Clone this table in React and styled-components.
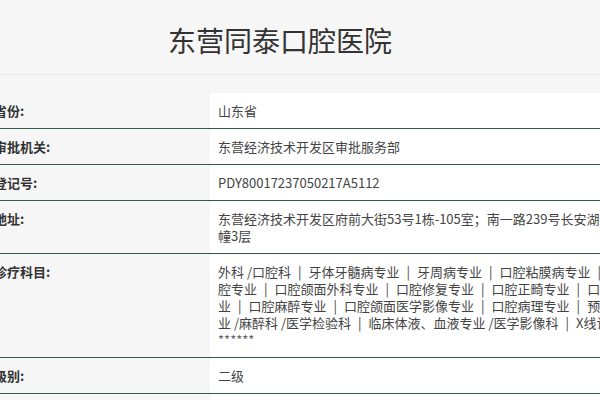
import React from 'react';
import styled, { createGlobalStyle } from 'styled-components';

const GlobalStyle = createGlobalStyle`
  body {
    margin: 0;
    background: #f6f6f6;
    font-family: "Noto Sans CJK SC", "Noto Sans", sans-serif;
    overflow: hidden;
  }
`;

const Header = styled.header`
  height: 75px;
  width: 600px;
  box-sizing: border-box;
  padding: 0 40px 0 0;
  display: flex;
  align-items: center;
  justify-content: center;
  border-bottom: 1px solid #e6e6e6;
`;

const Title = styled.h1`
  margin: 6px 0 0;
  font-size: 28px;
  font-weight: 400;
  color: #333;
`;

const InfoTable = styled.div`
  margin: 18px 0 0 -14px;
  width: 900px;
`;

const Row = styled.div`
  display: flex;
  border-bottom: 1px solid #2e5a4c;
`;

const Label = styled.div`
  width: 224px;
  flex: none;
  box-sizing: border-box;
  padding: 9px 8px;
  background: #f6f6f6;
  font-size: 13px;
  line-height: 17px;
  font-weight: 700;
  color: #333;
`;

const Value = styled.div`
  width: 454px;
  flex: none;
  box-sizing: border-box;
  padding: 9px 8px;
  background: #fff;
  font-size: 13px;
  line-height: 17px;
  color: #444;
`;

const Sep = styled.span`
  margin: 0 7px;
`;

const Mask = styled.div`
  color: #666;
`;

const departments = [
  '外科 /口腔科',
  '牙体牙髓病专业',
  '牙周病专业',
  '口腔粘膜病专业',
  '儿童口腔专业',
  '口腔颌面外科专业',
  '口腔修复专业',
  '口腔正畸专业',
  '口腔种植专业',
  '口腔麻醉专业',
  '口腔颌面医学影像专业',
  '口腔病理专业',
  '预防口腔专业 /麻醉科 /医学检验科',
  '临床体液、血液专业 /医学影像科',
  'X线诊断专业',
];

const rows = [
  { label: '省份:', value: '山东省' },
  { label: '审批机关:', value: '东营经济技术开发区审批服务部' },
  { label: '登记号:', value: 'PDY80017237050217A5112' },
  { label: '地址:', value: '东营经济技术开发区府前大街53号1栋-105室；南一路239号长安湖景苑东区幢3层' },
];

export default function App() {
  return (
    <>
      <GlobalStyle />
      <Header>
        <Title>东营同泰口腔医院</Title>
      </Header>
      <InfoTable>
        {rows.map((r) => (
          <Row key={r.label}>
            <Label>{r.label}</Label>
            <Value>{r.value}</Value>
          </Row>
        ))}
        <Row>
          <Label>诊疗科目:</Label>
          <Value>
            {departments.map((d, i) => (
              <React.Fragment key={d}>
                {i > 0 && <Sep>|</Sep>}
                {d}
              </React.Fragment>
            ))}
            <Mask>******</Mask>
          </Value>
        </Row>
        <Row>
          <Label>级别:</Label>
          <Value>二级</Value>
        </Row>
        <Row>
          <Label>类别:</Label>
          <Value>口腔医院</Value>
        </Row>
      </InfoTable>
    </>
  );
}
